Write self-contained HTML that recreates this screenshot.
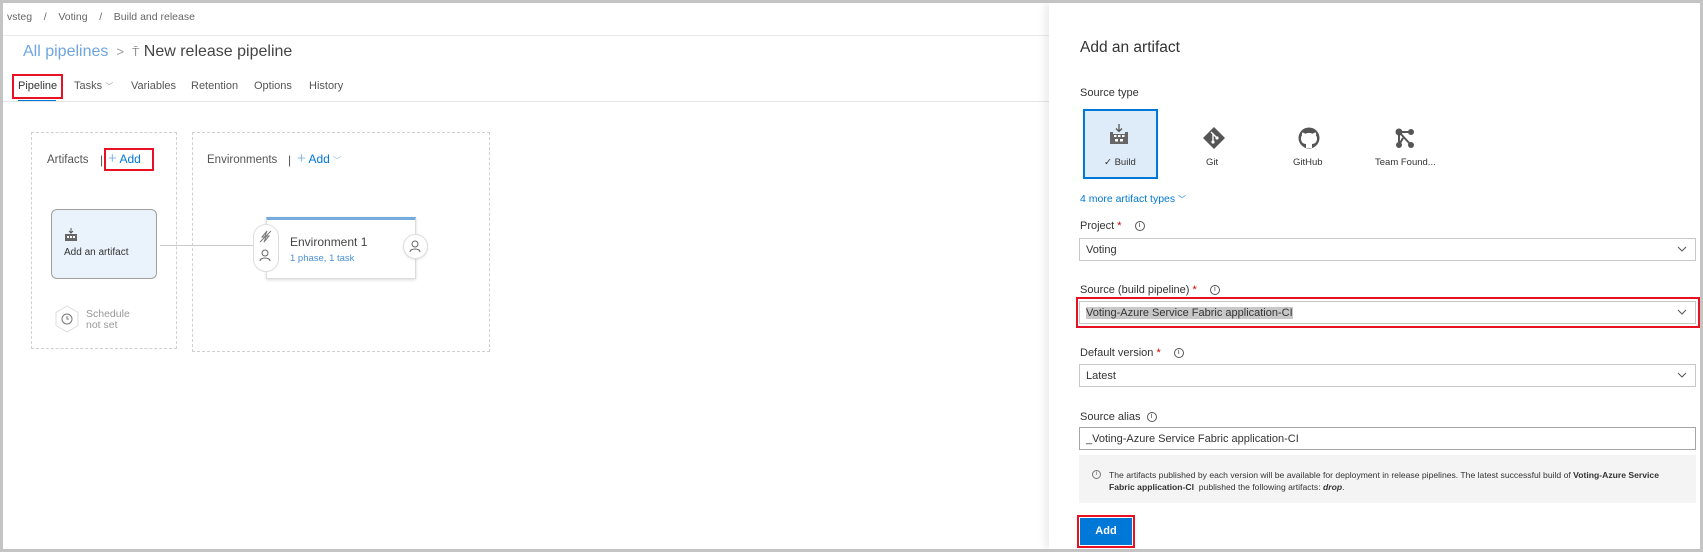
<!DOCTYPE html>
<html><head><meta charset="utf-8"><style>
*{box-sizing:border-box;margin:0;padding:0}
body{width:1703px;height:552px;overflow:hidden;background:#c4c4c4;font-family:"Liberation Sans",sans-serif;color:#333;position:relative}
.pg{position:absolute;left:3px;top:3px;width:1697px;height:546px;background:#fff;overflow:hidden}
.a{position:absolute;white-space:nowrap}
.red{position:absolute;border:2px solid #e81123}
.lbl{font-size:11px;color:#333}
.inp{position:absolute;left:1076px;width:617px;height:23px;border:1px solid #c8c8c8;background:#fff;font-size:11px;padding:5px 6px;color:#333}
.chev{position:absolute;right:8px;top:7px}
.star{color:#c00}
.ii{display:inline-block;width:10px;height:10px;border:1px solid #555;border-radius:50%;font-size:7px;line-height:8px;text-align:center;vertical-align:middle;margin-left:10px}
</style></head><body><div class="pg">
<div class="a" style="left:4px;top:8px;font-size:10.5px;color:#666">vsteg &nbsp;&nbsp;&nbsp;/&nbsp;&nbsp;&nbsp; Voting &nbsp;&nbsp;&nbsp;/&nbsp;&nbsp;&nbsp; Build and release</div>
<div class="a" style="left:0;top:32px;width:1046px;border-top:1px solid #eaeaea"></div>
<div class="a" style="left:20px;top:40px;font-size:16px;color:#6fa5e0">All pipelines <span style="color:#999;font-size:13px">&nbsp;&gt;&nbsp;</span> <span style="color:#555;font-size:12px">⍑</span> <span style="color:#444">New release pipeline</span></div>
<div class="a" style="left:15px;top:77px;font-size:11px;color:#333">Pipeline</div>
<div class="a" style="left:15px;top:97px;width:38px;height:2px;background:#0078d7"></div>
<div class="red" style="left:9px;top:71px;width:51px;height:25px"></div>
<div class="a" style="left:71px;top:77px;font-size:11px;color:#555">Tasks <span style="font-size:8px;color:#999">﹀</span></div>
<div class="a" style="left:128px;top:77px;font-size:11px;color:#555">Variables</div>
<div class="a" style="left:188px;top:77px;font-size:11px;color:#555">Retention</div>
<div class="a" style="left:251px;top:77px;font-size:11px;color:#555">Options</div>
<div class="a" style="left:306px;top:77px;font-size:11px;color:#555">History</div>
<div class="a" style="left:0;top:98px;width:1046px;border-top:1px solid #e4e4e4"></div>

<div class="a" style="left:28px;top:129px;width:146px;height:217px;border:1px dashed #d0d0d0"></div>
<div class="a" style="left:189px;top:129px;width:298px;height:220px;border:1px dashed #d0d0d0"></div>
<div class="a" style="left:44px;top:151px;font-size:11.5px;color:#555">Artifacts</div>
<div class="a" style="left:97px;top:150px;font-size:12px;color:#555">|</div>
<div class="a" style="left:105px;top:149px;font-size:12px;color:#0078d7"><span style="color:#8ab8e8;font-size:15px;line-height:12px">+</span> Add</div>
<div class="red" style="left:101px;top:145px;width:50px;height:23px"></div>
<div class="a" style="left:204px;top:151px;font-size:11.5px;color:#555">Environments</div>
<div class="a" style="left:285px;top:150px;font-size:12px;color:#555">|</div>
<div class="a" style="left:294px;top:149px;font-size:12px;color:#0078d7"><span style="color:#8ab8e8;font-size:15px;line-height:12px">+</span> Add <span style="font-size:8px;color:#8ab8e8">﹀</span></div>

<div class="a" style="left:48px;top:206px;width:106px;height:70px;background:#eaf2fb;border:1.5px solid #a0a0a0;border-radius:6px"></div>
<svg class="a" style="left:61px;top:225px" width="14" height="14" viewBox="0 0 14 14"><path d="M7 0v5M5 3l2 2 2-2" stroke="#555" fill="none"/><rect x="1" y="6" width="12" height="7" fill="#666"/><rect x="3" y="8" width="2" height="2" fill="#fff"/><rect x="6" y="8" width="2" height="2" fill="#fff"/><rect x="9" y="8" width="2" height="2" fill="#fff"/></svg>
<div class="a" style="left:61px;top:244px;font-size:10px;color:#333">Add an artifact</div>
<div class="a" style="left:157px;top:242px;width:94px;border-top:1px solid #ccc"></div>
<svg class="a" style="left:51px;top:302px" width="26" height="28" viewBox="0 0 26 28"><path d="M13 1L24 7.5V20.5L13 27L2 20.5V7.5Z" fill="#fff" stroke="#ddd"/><circle cx="13" cy="14" r="5" fill="none" stroke="#777"/><path d="M13 11v3h2" stroke="#777" fill="none"/></svg>
<div class="a" style="left:83px;top:306px;font-size:10.5px;color:#999;line-height:11px">Schedule<br>not set</div>

<div class="a" style="left:263px;top:214px;width:150px;height:62px;border:1px solid #ddd;border-top:3px solid #75acdf;box-shadow:0 1px 3px rgba(0,0,0,.15)"></div>
<div class="a" style="left:250px;top:221px;width:26px;height:48px;border:1px solid #ddd;border-radius:13px;background:#fff"></div>
<svg class="a" style="left:256px;top:227px" width="13" height="13" viewBox="0 0 13 13"><path d="M8 1L3 7h4l-2 5 5-6H6Z" fill="none" stroke="#777"/><path d="M1 12L12 1" stroke="#777"/></svg>
<svg class="a" style="left:256px;top:246px" width="12" height="13" viewBox="0 0 12 13"><circle cx="6" cy="4" r="3" fill="none" stroke="#666"/><path d="M1 12c0-4 10-4 10 0" fill="none" stroke="#666"/></svg>
<div class="a" style="left:287px;top:232px;font-size:12px;color:#444">Environment 1</div>
<div class="a" style="left:287px;top:250px;font-size:9.5px;color:#4a90d9">1 phase, 1 task</div>
<div class="a" style="left:400px;top:231px;width:25px;height:25px;border:1px solid #ddd;border-radius:50%;background:#fff;box-shadow:0 1px 2px rgba(0,0,0,.1)"></div>
<svg class="a" style="left:406px;top:237px" width="12" height="13" viewBox="0 0 12 13"><circle cx="6" cy="4" r="3" fill="none" stroke="#666"/><path d="M1 12c0-4 10-4 10 0" fill="none" stroke="#666"/></svg>

<div class="a" style="left:1046px;top:0;width:651px;height:546px;background:#fff;box-shadow:-4px 0 8px rgba(0,0,0,.08)"></div>
<div class="a" style="left:1077px;top:36px;font-size:15.5px;color:#333">Add an artifact</div>
<div class="a lbl" style="left:1077px;top:84px">Source type</div>
<div class="a" style="left:1080px;top:106px;width:75px;height:70px;background:#deecf9;border:2px solid #0078d7"></div>
<svg class="a" style="left:1106px;top:121px" width="20" height="20" viewBox="0 0 20 20"><path d="M10 0v7M7 4.5l3 3 3-3" stroke="#555" fill="none" stroke-width="1.3"/><path d="M1 8h3v2h12V8h3v12H1Z" fill="#666"/><rect x="5" y="11" width="2.5" height="2" fill="#fff"/><rect x="9" y="11" width="2.5" height="2" fill="#fff"/><rect x="13" y="11" width="2.5" height="2" fill="#fff"/><rect x="6" y="15" width="3" height="2.5" fill="#fff"/><rect x="11" y="15" width="3" height="2.5" fill="#fff"/></svg>
<div class="a" style="left:1101px;top:154px;font-size:9.5px;color:#333">✓ Build</div>
<svg class="a" style="left:1200px;top:124px" width="22" height="22" viewBox="0 0 22 22"><path d="M11 0L22 11 11 22 0 11Z" fill="#555"/><path d="M8 5l6 6M10 7v8M10 7l4 4" stroke="#fff" stroke-width="1.4" fill="none"/><circle cx="10" cy="15" r="1.6" fill="#fff"/><circle cx="14" cy="11" r="1.6" fill="#fff"/></svg>
<div class="a" style="left:1203px;top:154px;font-size:9.5px;color:#333">Git</div>
<svg class="a" style="left:1295px;top:124px" width="22" height="22" viewBox="0 0 22 22"><circle cx="11" cy="11" r="10.5" fill="#555"/><path d="M8 21v-4c-3 0-5-2-5-5.5 0-1.3.4-2.3 1-3-.2-.8-.2-2 .3-3 1 0 2 .5 3 1.2a9 9 0 0 1 7.4 0c1-.7 2-1.2 3-1.2.5 1 .5 2.2.3 3 .6.7 1 1.7 1 3 0 3.5-2 5.5-5 5.5v4Z" fill="#fff"/></svg>
<div class="a" style="left:1290px;top:154px;font-size:9.5px;color:#333">GitHub</div>
<svg class="a" style="left:1391px;top:124px" width="22" height="22" viewBox="0 0 22 22"><circle cx="5" cy="5" r="3.5" fill="#555"/><circle cx="17" cy="5" r="3" fill="#555"/><circle cx="5" cy="18" r="3" fill="#555"/><circle cx="17" cy="18" r="3" fill="#555"/><path d="M5 5L17 18M5 5L17 5M5 5v13M9 11L5 18" stroke="#555" stroke-width="2" fill="none"/></svg>
<div class="a" style="left:1372px;top:154px;font-size:9.5px;color:#333">Team Found...</div>
<div class="a" style="left:1077px;top:190px;font-size:10.5px;color:#0078d7">4 more artifact types <span style="font-size:8px">﹀</span></div>

<div class="a lbl" style="left:1077px;top:217px">Project <span class="star">*</span> <span class="ii">i</span></div>
<div class="inp" style="top:235px">Voting<svg class="chev" width="10" height="7" viewBox="0 0 10 7"><path d="M1 1l4 4 4-4" stroke="#555" fill="none"/></svg></div>
<div class="a lbl" style="left:1077px;top:281px">Source (build pipeline) <span class="star">*</span> <span class="ii">i</span></div>
<div class="inp" style="top:298px"><span style="background:#c8c8c8">Voting-Azure Service Fabric application-CI</span><svg class="chev" width="10" height="7" viewBox="0 0 10 7"><path d="M1 1l4 4 4-4" stroke="#555" fill="none"/></svg></div>
<div class="red" style="left:1073px;top:294px;width:624px;height:31px;border-width:2.5px"></div>
<div class="a lbl" style="left:1077px;top:344px">Default version <span class="star">*</span> <span class="ii">i</span></div>
<div class="inp" style="top:361px">Latest<svg class="chev" width="10" height="7" viewBox="0 0 10 7"><path d="M1 1l4 4 4-4" stroke="#555" fill="none"/></svg></div>
<div class="a lbl" style="left:1077px;top:408px">Source alias <span class="ii" style="margin-left:3px">i</span></div>
<div class="inp" style="top:424px;border-color:#a6a6a6">_Voting-Azure Service Fabric application-CI</div>
<div class="a" style="left:1076px;top:452px;width:617px;height:48px;background:#f4f4f4"></div>
<div class="a" style="left:1089px;top:467px;width:9px;height:9px;border:1px solid #777;border-radius:50%;font-size:6px;line-height:7px;text-align:center;color:#555">i</div>
<div class="a" style="left:1106px;top:466px;font-size:8.6px;color:#333;line-height:12px">The artifacts published by each version will be available for deployment in release pipelines. The latest successful build of <b>Voting-Azure Service</b><br><b>Fabric application-CI</b> &nbsp;published the following artifacts: <b><i>drop</i></b>.</div>
<div class="a" style="left:1077px;top:515px;width:52px;height:27px;background:#0078d7;color:#fff;font-size:11px;font-weight:bold;text-align:center;line-height:27px">Add</div>
<div class="red" style="left:1074px;top:512px;width:58px;height:33px"></div>
</div></body></html>
